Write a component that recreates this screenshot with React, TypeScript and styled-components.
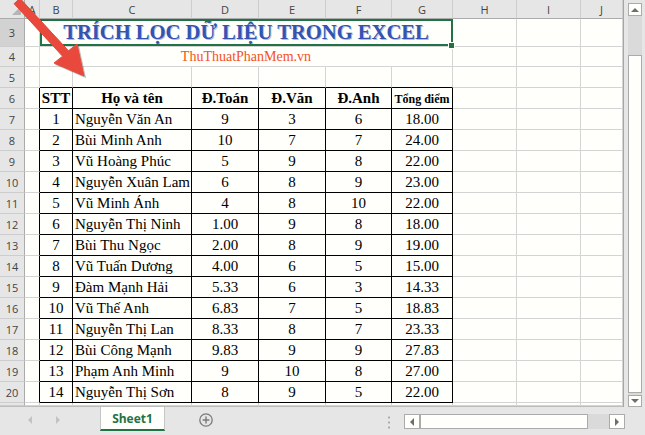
import React from 'react';
import styled, { createGlobalStyle } from 'styled-components';

const GlobalStyle = createGlobalStyle`
  html, body {
    margin: 0;
    padding: 0;
    background: #e6e6e6;
  }
  body {
    font-family: "Liberation Serif", serif;
  }
`;

const Window = styled.div`
  position: relative;
  width: 645px;
  height: 435px;
  display: flex;
  flex-direction: column;
  overflow: hidden;
  background: #e6e6e6;
`;

const Main = styled.div`
  display: flex;
  height: 407px;
`;

const Sheet = styled.div`
  display: grid;
  grid-template-columns: 25px 15px 33px 119px 67px 67px 66px 61px 64px 64px 42px;
  grid-template-rows: 19px 28px 20px 21px repeat(15, 21px) 3px;
  width: 623px;
  height: 407px;
  box-sizing: border-box;
  background: #fffffb;
  border-bottom: 1px solid #bdbdbd;
  overflow: hidden;
`;

const Corner = styled.div`
  position: relative;
  background: #e6e6e6;
  border-right: 1px solid #ababab;
  border-bottom: 1px solid #ababab;
  &::after {
    content: '';
    position: absolute;
    right: 3px;
    bottom: 3px;
    border-left: 9px solid transparent;
    border-bottom: 9px solid #b5b5b5;
  }
`;

const ColHead = styled.div`
  display: flex;
  align-items: center;
  justify-content: center;
  background: #e6e6e6;
  border-right: 1px solid #cdcdcd;
  border-bottom: 1px solid #ababab;
  font-family: "Open Sans", "Liberation Sans", sans-serif;
  font-size: 11px;
  color: #444;
`;

const RowHead = styled.div<{ $active?: boolean }>`
  display: flex;
  align-items: center;
  justify-content: center;
  background: ${(p) => (p.$active ? '#d2d2d2' : '#e6e6e6')};
  border-right: 1px solid #ababab;
  border-bottom: 1px solid #cdcdcd;
  font-family: "Open Sans", "Liberation Sans", sans-serif;
  font-size: 11px;
  color: #444;
`;

const Cell = styled.div<{
  $align?: 'left' | 'center';
  $bold?: boolean;
  $size?: number;
  $boxR?: boolean;
  $boxB?: boolean;
}>`
  display: flex;
  align-items: flex-end;
  justify-content: ${(p) => (p.$align === 'center' ? 'center' : 'flex-start')};
  box-sizing: border-box;
  padding: 0 2px 1px 2px;
  border-right: 1px solid ${(p) => (p.$boxR ? '#000' : '#d4d4d4')};
  border-bottom: 1px solid ${(p) => (p.$boxB ? '#000' : '#d4d4d4')};
  font-size: ${(p) => p.$size ?? 15}px;
  font-weight: ${(p) => (p.$bold ? 700 : 400)};
  color: #000;
  white-space: nowrap;
  overflow: hidden;
`;

const TitleCell = styled.div`
  position: relative;
  grid-column: span 6;
  display: flex;
  align-items: center;
  justify-content: center;
  border-right: 1px solid #d4d4d4;
  border-bottom: 1px solid #d4d4d4;
  font-size: 20.6px;
  font-weight: 700;
  color: #3453b3;
  text-shadow: 1px 1px 0 rgba(40, 60, 140, 0.35);
  &::before {
    content: '';
    position: absolute;
    inset: 0 -1px 0 0;
    border: 2px solid #217346;
  }
  &::after {
    content: '';
    position: absolute;
    right: -3px;
    bottom: -3px;
    width: 5px;
    height: 5px;
    background: #217346;
    border: 1px solid #fffffb;
    z-index: 2;
  }
`;

const BrandCell = styled.div`
  grid-column: span 6;
  display: flex;
  align-items: flex-end;
  justify-content: center;
  padding-bottom: 1px;
  border-right: 1px solid #d4d4d4;
  border-bottom: 1px solid #d4d4d4;
  font-size: 14px;
  color: #f5501c;
`;

const VScroll = styled.div`
  width: 22px;
  box-sizing: border-box;
  display: flex;
  flex-direction: column;
  padding: 3px 3px 0 4px;
  background: #e6e6e6;
  border-left: 1px solid #a6a6a6;
`;

const ScrollBtn = styled.div<{ $dir: 'up' | 'down' | 'left' | 'right'; $h?: number; $w?: number }>`
  position: relative;
  flex: none;
  box-sizing: border-box;
  width: ${(p) => (p.$w ? `${p.$w}px` : 'auto')};
  height: ${(p) => (p.$h ? `${p.$h}px` : 'auto')};
  background: #fffffb;
  border: 1px solid #ababab;
  display: flex;
  align-items: center;
  justify-content: center;
  &::after {
    content: '';
    width: 0;
    height: 0;
    ${(p) =>
      p.$dir === 'up'
        ? 'border-left: 4px solid transparent; border-right: 4px solid transparent; border-bottom: 4px solid #6e6e6e;'
        : p.$dir === 'down'
        ? 'border-left: 4px solid transparent; border-right: 4px solid transparent; border-top: 4px solid #6e6e6e;'
        : p.$dir === 'left'
        ? 'border-top: 4px solid transparent; border-bottom: 4px solid transparent; border-right: 4px solid #6e6e6e;'
        : 'border-top: 4px solid transparent; border-bottom: 4px solid transparent; border-left: 4px solid #6e6e6e;'}
  }
`;

const VTrack = styled.div`
  flex: 1;
  display: flex;
  flex-direction: column;
  padding: 39px 0 2px;
  background: #dadada;
`;

const Thumb = styled.div<{ $w?: number }>`
  flex: ${(p) => (p.$w ? 'none' : 1)};
  width: ${(p) => (p.$w ? `${p.$w}px` : 'auto')};
  box-sizing: border-box;
  background: #fffffb;
  border: 1px solid #ababab;
`;

const TabBar = styled.div`
  display: flex;
  align-items: flex-start;
  height: 28px;
  background: #e6e6e6;
`;

const NavArea = styled.div`
  width: 100px;
  height: 26px;
  box-sizing: border-box;
  display: flex;
  align-items: center;
  gap: 24px;
  padding-left: 28px;
`;

const NavArrow = styled.div<{ $dir: 'left' | 'right' }>`
  width: 0;
  height: 0;
  border-top: 4px solid transparent;
  border-bottom: 4px solid transparent;
  ${(p) =>
    p.$dir === 'left'
      ? 'border-right: 4px solid #c2c2c2;'
      : 'border-left: 4px solid #c2c2c2;'}
`;

const SheetTab = styled.div`
  width: 65px;
  height: 24px;
  box-sizing: border-box;
  display: flex;
  align-items: center;
  justify-content: center;
  padding-top: 1px;
  background: #fffffb;
  border-left: 1px solid #c6c6c6;
  border-right: 1px solid #c6c6c6;
  border-bottom: 2px solid #217346;
  font-family: "Open Sans", "Liberation Sans", sans-serif;
  font-size: 12px;
  font-weight: 700;
  color: #217346;
`;

const AddButton = styled.div`
  margin: 6px 0 0 34px;
  width: 14px;
  height: 14px;
  display: flex;
`;

const Spacer = styled.div`
  flex: 1;
`;

const Grip = styled.div`
  margin: 8px 14px 0 0;
  width: 2px;
  height: 14px;
  background: radial-gradient(circle, #a8a8a8 1px, transparent 1.2px) 0 0 / 2px 5px repeat-y;
`;

const HScroll = styled.div`
  display: flex;
  margin: 7px 20px 0 0;
  width: 221px;
  height: 15px;
`;

const HTrack = styled.div`
  flex: 1;
  background: #dadada;
`;

const Overlay = styled.svg`
  position: absolute;
  left: 0;
  top: 0;
  pointer-events: none;
  z-index: 5;
`;

const COLS = ['A', 'B', 'C', 'D', 'E', 'F', 'G', 'H', 'I', 'J'];

type Student = [number, string, string, string, string, string];

const students: Student[] = [
  [1, 'Nguyễn Văn An', '9', '3', '6', '18.00'],
  [2, 'Bùi Minh Anh', '10', '7', '7', '24.00'],
  [3, 'Vũ Hoàng Phúc', '5', '9', '8', '22.00'],
  [4, 'Nguyễn Xuân Lam', '6', '8', '9', '23.00'],
  [5, 'Vũ Minh Ánh', '4', '8', '10', '22.00'],
  [6, 'Nguyễn Thị Ninh', '1.00', '9', '8', '18.00'],
  [7, 'Bùi Thu Ngọc', '2.00', '8', '9', '19.00'],
  [8, 'Vũ Tuấn Dương', '4.00', '6', '5', '15.00'],
  [9, 'Đàm Mạnh Hải', '5.33', '6', '3', '14.33'],
  [10, 'Vũ Thế Anh', '6.83', '7', '5', '18.83'],
  [11, 'Nguyễn Thị Lan', '8.33', '8', '7', '23.33'],
  [12, 'Bùi Công Mạnh', '9.83', '9', '9', '27.83'],
  [13, 'Phạm Anh Minh', '9', '10', '8', '27.00'],
  [14, 'Nguyễn Thị Sơn', '8', '9', '5', '22.00'],
];

const headers: { label: string; size?: number; align: 'left' | 'center' }[] = [
  { label: 'STT', align: 'center' },
  { label: 'Họ và tên', align: 'center' },
  { label: 'Đ.Toán', align: 'center' },
  { label: 'Đ.Văn', align: 'center' },
  { label: 'Đ.Anh', align: 'center' },
  { label: 'Tổng điểm', size: 12, align: 'center' },
];

const Blank = ({ n, k }: { n: number; k: string }) => (
  <>
    {Array.from({ length: n }, (_, i) => (
      <Cell key={`${k}-${i}`} />
    ))}
  </>
);

const App: React.FC = () => {
  return (
    <>
      <GlobalStyle />
      <Window>
        <Main>
          <Sheet>
            <Corner />
            {COLS.map((c) => (
              <ColHead key={c}>{c}</ColHead>
            ))}

            <RowHead $active>3</RowHead>
            <Cell />
            <TitleCell>TRÍCH LỌC DỮ LIỆU TRONG EXCEL</TitleCell>
            <Blank n={3} k="r3" />

            <RowHead>4</RowHead>
            <Cell />
            <BrandCell>ThuThuatPhanMem.vn</BrandCell>
            <Blank n={3} k="r4" />

            <RowHead>5</RowHead>
            <Cell />
            {headers.map((h) => (
              <Cell key={`r5-${h.label}`} $boxB />
            ))}
            <Blank n={3} k="r5" />

            <RowHead>6</RowHead>
            <Cell $boxR />
            {headers.map((h) => (
              <Cell key={h.label} $bold $align={h.align} $size={h.size} $boxR $boxB>
                {h.label}
              </Cell>
            ))}
            <Blank n={3} k="r6" />

            {students.map((s, i) => (
              <React.Fragment key={s[0]}>
                <RowHead>{i + 7}</RowHead>
                <Cell $boxR />
                <Cell $align="center" $boxR $boxB>{s[0]}</Cell>
                <Cell $boxR $boxB>{s[1]}</Cell>
                <Cell $align="center" $boxR $boxB>{s[2]}</Cell>
                <Cell $align="center" $boxR $boxB>{s[3]}</Cell>
                <Cell $align="center" $boxR $boxB>{s[4]}</Cell>
                <Cell $align="center" $boxR $boxB>{s[5]}</Cell>
                <Blank n={3} k={`s${i}`} />
              </React.Fragment>
            ))}

            <RowHead />
            <Cell />
            <Blank n={9} k="r21" />
          </Sheet>

          <VScroll>
            <ScrollBtn $dir="up" $h={13} />
            <VTrack>
              <Thumb />
            </VTrack>
            <ScrollBtn $dir="down" $h={12} />
          </VScroll>
        </Main>

        <TabBar>
          <NavArea>
            <NavArrow $dir="left" />
            <NavArrow $dir="right" />
          </NavArea>
          <SheetTab>Sheet1</SheetTab>
          <AddButton>
            <svg width="14" height="14" viewBox="0 0 14 14">
              <circle cx="7" cy="7" r="6.2" fill="none" stroke="#7a7a7a" strokeWidth="1.3" />
              <path d="M7 3.6v6.8M3.6 7h6.8" stroke="#7a7a7a" strokeWidth="1.4" />
            </svg>
          </AddButton>
          <Spacer />
          <Grip />
          <HScroll>
            <ScrollBtn $dir="left" $w={16} />
            <Thumb $w={168} />
            <HTrack />
            <ScrollBtn $dir="right" $w={16} />
          </HScroll>
        </TabBar>

        <Overlay width="100" height="90" viewBox="0 0 100 90">
          <polygon
            points="15.6,5.2 21.4,-0.2 69.9,52.3 78.5,45.5 85.5,77.5 55.5,64.5 64.1,57.7"
            fill="rgba(0,0,0,0.18)"
            stroke="rgba(0,0,0,0.18)"
            strokeWidth="1"
            strokeLinejoin="round"
          />
          <polygon
            points="14.1,3.7 19.9,-1.7 68.4,50.8 77,44 84,76 54,63 62.6,56.2"
            fill="#e8493c"
            stroke="#e8493c"
            strokeWidth="1"
            strokeLinejoin="round"
          />
        </Overlay>
      </Window>
    </>
  );
};

export default App;
